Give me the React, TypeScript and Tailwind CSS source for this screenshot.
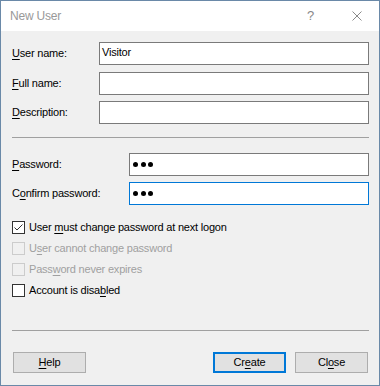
// "New User" dialog, Windows 10 style. Everything laid out by flow with
// pixel margins read off the reference; fonts are Liberation Sans at 11px
// with slight negative tracking to approximate Segoe UI 9pt.

const FONT = "font-['Liberation_Sans',Arial,sans-serif] text-[11px] tracking-[-0.2px]";

function Mnemonic({ text, at }: { text: string; at: number }) {
  return (
    <>
      {text.slice(0, at)}
      <span className="underline underline-offset-[2px]">{text[at]}</span>
      {text.slice(at + 1)}
    </>
  );
}

function TextRow({
  label,
  at,
  inputLeft,
  value,
  dots,
  focused,
  className,
}: {
  label: string;
  at: number;
  inputLeft: number;
  value?: string;
  dots?: boolean;
  focused?: boolean;
  className?: string;
}) {
  return (
    <div className={`flex h-[23px] items-center ${className ?? ''}`}>
      <div className="shrink-0 text-black" style={{ width: inputLeft - 12 }}>
        <Mnemonic text={label} at={at} />
      </div>
      <div
        className={`flex h-[23px] flex-1 items-center bg-white pl-[2px] ${
          focused ? 'border border-[#0078d7]' : 'border border-[#7a7a7a]'
        }`}
      >
        {dots ? (
          <div className="ml-[1px] flex gap-[2.5px]">
            <span className="h-[5px] w-[5px] rounded-full bg-black" />
            <span className="h-[5px] w-[5px] rounded-full bg-black" />
            <span className="h-[5px] w-[5px] rounded-full bg-black" />
          </div>
        ) : (
          <span className="-mt-[2px] text-black">{value}</span>
        )}
      </div>
    </div>
  );
}

function Check({
  label,
  at,
  checked,
  disabled,
  className,
}: {
  label: string;
  at: number;
  checked?: boolean;
  disabled?: boolean;
  className?: string;
}) {
  return (
    <div className={`flex h-[13px] items-center ${className ?? ''}`}>
      <div
        className={`h-[13px] w-[13px] shrink-0 border ${
          disabled ? 'border-[#cccccc]' : 'border-[#333333] bg-white'
        }`}
      >
        {checked && (
          <svg width="11" height="11" viewBox="0 0 11 11" className="block">
            <polyline points="1.5,5.5 4,8 9.5,2.5" fill="none" stroke="#333" strokeWidth="1" />
          </svg>
        )}
      </div>
      <span className={`ml-[4px] ${disabled ? 'text-[#a0a0a0]' : 'text-black'}`}>
        <Mnemonic text={label} at={at} />
      </span>
    </div>
  );
}

function Button({ label, at, primary }: { label: string; at: number; primary?: boolean }) {
  return (
    <div
      className={`flex h-[21px] w-[73px] items-center justify-center bg-[#e1e1e1] text-black ${
        primary ? 'border-2 border-[#0078d7]' : 'border border-[#adadad]'
      }`}
    >
      <Mnemonic text={label} at={at} />
    </div>
  );
}

export default function App() {
  return (
    <div
      className={`flex h-[386px] w-[380px] flex-col border border-[#6a89a8] bg-[#f0f0f0] ${FONT}`}
    >
      {/* title bar */}
      <div className="flex h-[30px] items-center bg-white">
        <span className="ml-[9px] text-[12px] text-[#999999]">New User</span>
        <span className="ml-auto text-[13px] font-light text-[#888888]">?</span>
        <svg width="10" height="10" viewBox="0 0 10 10" className="ml-[38px] mr-[17px]">
          <path d="M0.5 0.5 L9.5 9.5 M9.5 0.5 L0.5 9.5" stroke="#8a8a8a" strokeWidth="1" />
        </svg>
      </div>

      <div className="flex flex-1 flex-col pl-[11px] pr-[10px]">
        <TextRow label="User name:" at={0} inputLeft={99} value="Visitor" className="mt-[11px]" />
        <TextRow label="Full name:" at={0} inputLeft={99} className="mt-[7px]" />
        <TextRow label="Description:" at={0} inputLeft={99} className="mt-[6px]" />

        <div className="mt-[13px] h-px bg-[#a0a0a0]" />

        <TextRow label="Password:" at={0} inputLeft={129} dots className="mt-[15px]" />
        <TextRow label="Confirm password:" at={1} inputLeft={129} dots focused className="mt-[6px]" />

        <Check label="User must change password at next logon" at={5} checked className="mt-[16px]" />
        <Check label="User cannot change password" at={1} disabled className="mt-[8px]" />
        <Check label="Password never expires" at={4} disabled className="mt-[8px]" />
        <Check label="Account is disabled" at={15} className="mt-[8px]" />

        <div className="mt-[33px] h-px bg-[#a0a0a0]" />

        <div className="mt-[21px] flex pl-[1px] pr-px">
          <Button label="Help" at={0} />
          <div className="ml-auto flex gap-[9px]">
            <Button label="Create" at={2} primary />
            <Button label="Close" at={2} />
          </div>
        </div>
      </div>
    </div>
  );
}
